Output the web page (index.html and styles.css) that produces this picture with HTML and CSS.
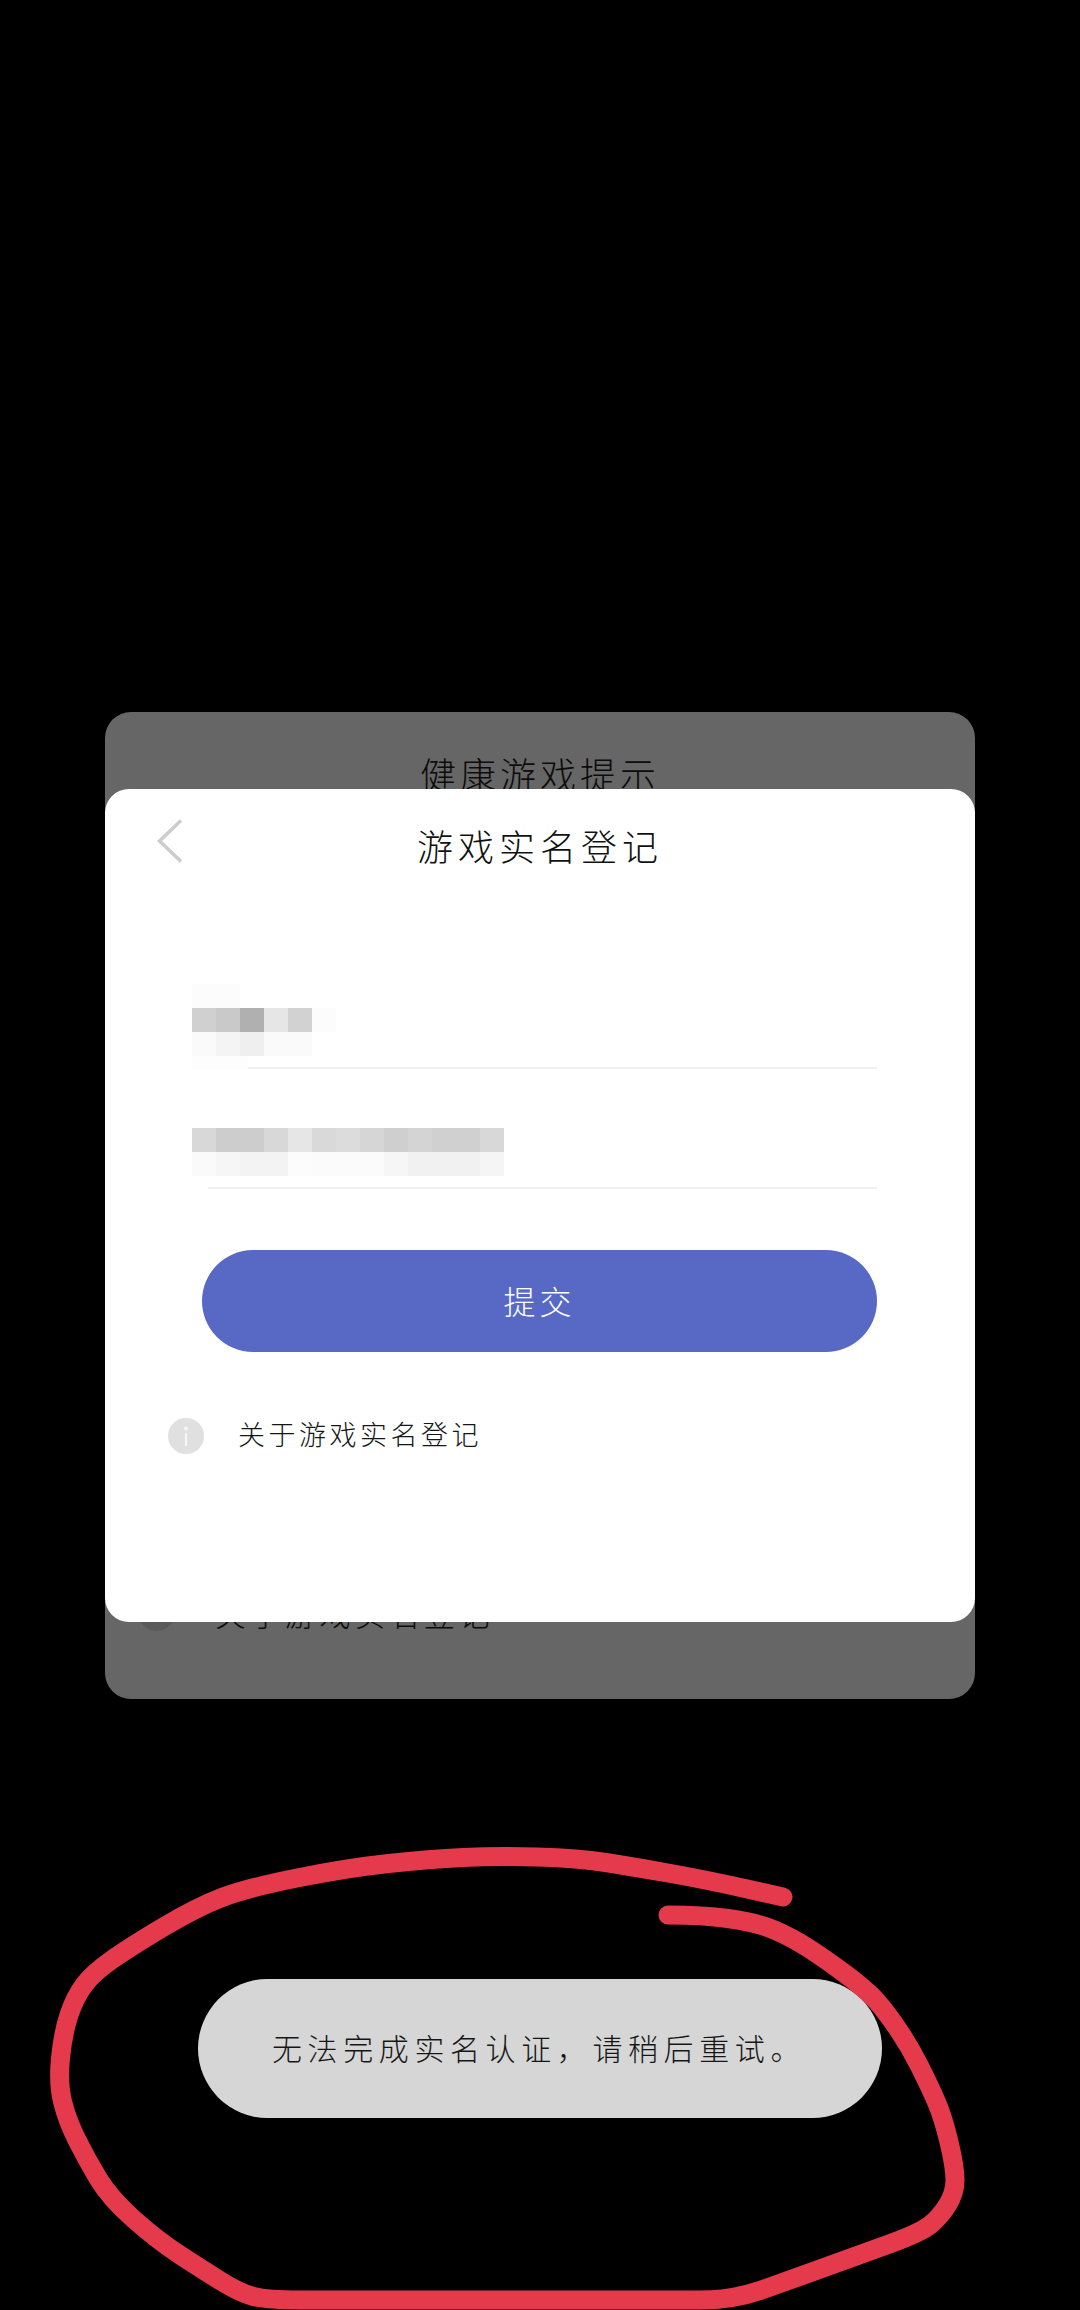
FILE: index.html
```html
<!DOCTYPE html>
<html lang="zh-CN">
<head>
<meta charset="utf-8">
<title>游戏实名登记</title>
<link rel="stylesheet" href="styles.css">
</head>
<body>
<main class="screen">
  <section class="back-card">
    <h2 class="back-title">健康游戏提示</h2>
    <div class="back-about">
      <span class="back-info"></span>
      <span class="back-about-text">关于游戏实名登记</span>
    </div>
    <div class="front-card">
      <header class="front-head">
        <svg class="chevron" viewBox="0 0 26 44" aria-hidden="true"><path d="M24 1.5 2.5 22 24 42.5"/></svg>
        <h1 class="front-title">游戏实名登记</h1>
      </header>
      <div class="field field-name">
        <div class="mosaic name-a"></div>
        <div class="mosaic name-b"></div>
        <div class="mosaic name-c"></div>
        <div class="rule rule-name"></div>
      </div>
      <div class="field field-id">
        <div class="mosaic id-a"></div>
        <div class="mosaic id-b"></div>
        <div class="rule rule-id"></div>
      </div>
      <button class="submit" type="button">提交</button>
      <div class="about">
        <svg class="info" viewBox="0 0 36 36" aria-hidden="true">
          <circle class="info-disc" cx="18" cy="18" r="18"/>
          <circle class="info-mark" cx="18" cy="10.5" r="2"/>
          <rect class="info-mark" x="16.8" y="15" width="2.4" height="13" rx="1"/>
        </svg>
        <span class="about-text">关于游戏实名登记</span>
      </div>
    </div>
  </section>
  <div class="toast">无法完成实名认证&#xFF0C;请稍后重试。</div>
  <svg class="scribble" viewBox="0 0 1080 2310" aria-hidden="true">
    <path d="M783 1897 L745 1888.5 Q707 1880 673.5 1874 Q640 1868 609 1863 Q578 1858 537 1857 Q496 1856 463 1857.5 Q430 1859 388.5 1863.5 Q347 1868 297 1878 Q247 1888 222 1897.5 Q197 1907 163.5 1927 Q130 1947 111.5 1960 Q93 1973 84 1985 Q75 1997 69 2015 Q63 2033 60.5 2058 Q58 2083 62.5 2101.5 Q67 2120 77 2140 Q87 2160 98.5 2179 Q110 2198 133.5 2219 Q157 2240 180 2255 Q203 2270 221.5 2281.5 Q240 2293 253.5 2296.5 Q267 2300 300 2300 L700 2300 Q733 2300 761.5 2290 Q790 2280 821.5 2268.5 Q853 2257 886.5 2245 Q920 2233 930 2225 Q940 2217 947.5 2205 Q955 2193 955 2180 Q955 2167 949 2142 Q943 2117 936.5 2102 Q930 2087 920 2067 Q910 2047 898.5 2030 Q887 2013 877 2001.5 Q867 1990 842 1971.5 Q817 1953 800 1943 Q783 1933 768 1927.5 Q753 1922 728 1918.5 Q703 1915 668 1915"/>
  </svg>
</main>
</body>
</html>
```

FILE: styles.css
```css
* { box-sizing: border-box; }
html, body { margin: 0; padding: 0; background: #000; }
body { font-family: "Noto Sans CJK SC", "Noto Sans", sans-serif; font-weight: 300; }
.screen {
  position: relative;
  width: 1080px;
  height: 2310px;
  padding-top: 712px;
  background: #000;
  overflow: hidden;
}
.back-card {
  position: relative;
  width: 870px;
  height: 987px;
  margin-left: 105px;
  border-radius: 26px;
  background: #666;
  padding-top: 37px;
}
.back-title {
  margin: 0;
  font-size: 36px;
  font-weight: 300;
  line-height: 48px;
  letter-spacing: 4px;
  color: #0c0c0c;
  text-align: center;
}
.back-about {
  display: flex;
  align-items: center;
  gap: 40px;
  margin: 797px 0 0 33px;
}
.back-info { width: 37px; height: 37px; border-radius: 50%; background: #5a5a5a; }
.back-about-text { font-size: 31px; line-height: 37px; letter-spacing: 3.800px; color: #0c0c0c; }
.front-card {
  position: absolute;
  left: 0;
  top: 77px;
  width: 870px;
  height: 833px;
  border-radius: 24px;
  background: #fff;
  padding-top: 30px;
}
.front-head {
  position: relative;
  display: flex;
  justify-content: center;
  height: 165px;
}
.chevron {
  position: absolute;
  left: 52px;
  top: 0;
  width: 26px;
  height: 44px;
  fill: none;
  stroke: #ccc;
  stroke-width: 3.500;
}
.front-title {
  margin: 4px 0 0;
  font-size: 36px;
  font-weight: 300;
  line-height: 44px;
  letter-spacing: 5px;
  color: #111;
}
.field { margin-left: 87px; }
.field-name { background: linear-gradient(#fdfdfd, #fdfdfd) 0 72px / 56px 36px no-repeat; }
.mosaic { height: 24px; }
.name-a { width: 48px; background: #fcfcfc; }
.name-b {
  width: 144px;
  background: linear-gradient(90deg,
    #d0d0d0 0 24px, #c9c9c9 24px 48px, #b0b0b0 48px 72px,
    #e6e6e6 72px 96px, #d2d2d2 96px 120px, #fcfcfc 120px 144px);
}
.name-c {
  width: 120px;
  background: linear-gradient(90deg,
    #fafafa 0 24px, #f4f4f4 24px 48px, #efefef 48px 72px, #fafafa 72px 120px);
}
.rule { height: 2px; background: #f0f0f0; }
.rule-name { width: 629px; margin: 11px 0 0 56px; }
.field-id { margin-top: 59px; }
.id-a {
  width: 312px;
  background: linear-gradient(90deg,
    #d8d8d8 0 24px, #cdcdcd 24px 72px, #d8d8d8 72px 96px, #e6e6e6 96px 120px,
    #d9d9d9 120px 144px, #dcdcdc 144px 168px, #d6d6d6 168px 192px, #cfcfcf 192px 216px,
    #d4d4d4 216px 240px, #d0d0d0 240px 288px, #d8d8d8 288px 312px);
}
.id-b {
  width: 312px;
  background: linear-gradient(90deg,
    #fafafa 0 24px, #f6f6f6 24px 48px, #f3f3f3 48px 96px, #fcfcfc 96px 120px,
    #fbfbfb 120px 192px, #f6f6f6 192px 216px, #f1f1f1 216px 288px, #f5f5f5 288px 312px);
}
.rule-id { width: 669px; margin: 11px 0 0 16px; }
.submit {
  display: block;
  width: 675px;
  height: 102px;
  margin: 61px 0 0 97px;
  padding: 0 0 2px;
  border: 0;
  border-radius: 51px;
  background: #5869c5;
  color: #fff;
  font: inherit;
  font-size: 32px;
  letter-spacing: 4px;
}
.about {
  display: flex;
  align-items: center;
  gap: 34px;
  margin: 66px 0 0 63px;
}
.info { width: 36px; height: 36px; flex: none; }
.info-disc { fill: #e0e0e0; }
.info-mark { fill: #f6f6f6; }
.about-text {
  margin-top: -5px;
  font-size: 27px;
  line-height: 36px;
  letter-spacing: 3.500px;
  color: #161616;
}
.toast {
  width: 684px;
  height: 139px;
  margin: 280px 0 0 198px;
  padding-left: 74px;
  border-radius: 70px;
  background: #d6d6d6;
  color: #161616;
  font-size: 30px;
  line-height: 136px;
  letter-spacing: 5.600px;
}
.scribble {
  position: absolute;
  left: 0;
  top: 0;
  width: 1080px;
  height: 2310px;
  fill: none;
  stroke: #e43a4b;
  stroke-width: 19;
  stroke-linecap: round;
  stroke-linejoin: round;
}
```
